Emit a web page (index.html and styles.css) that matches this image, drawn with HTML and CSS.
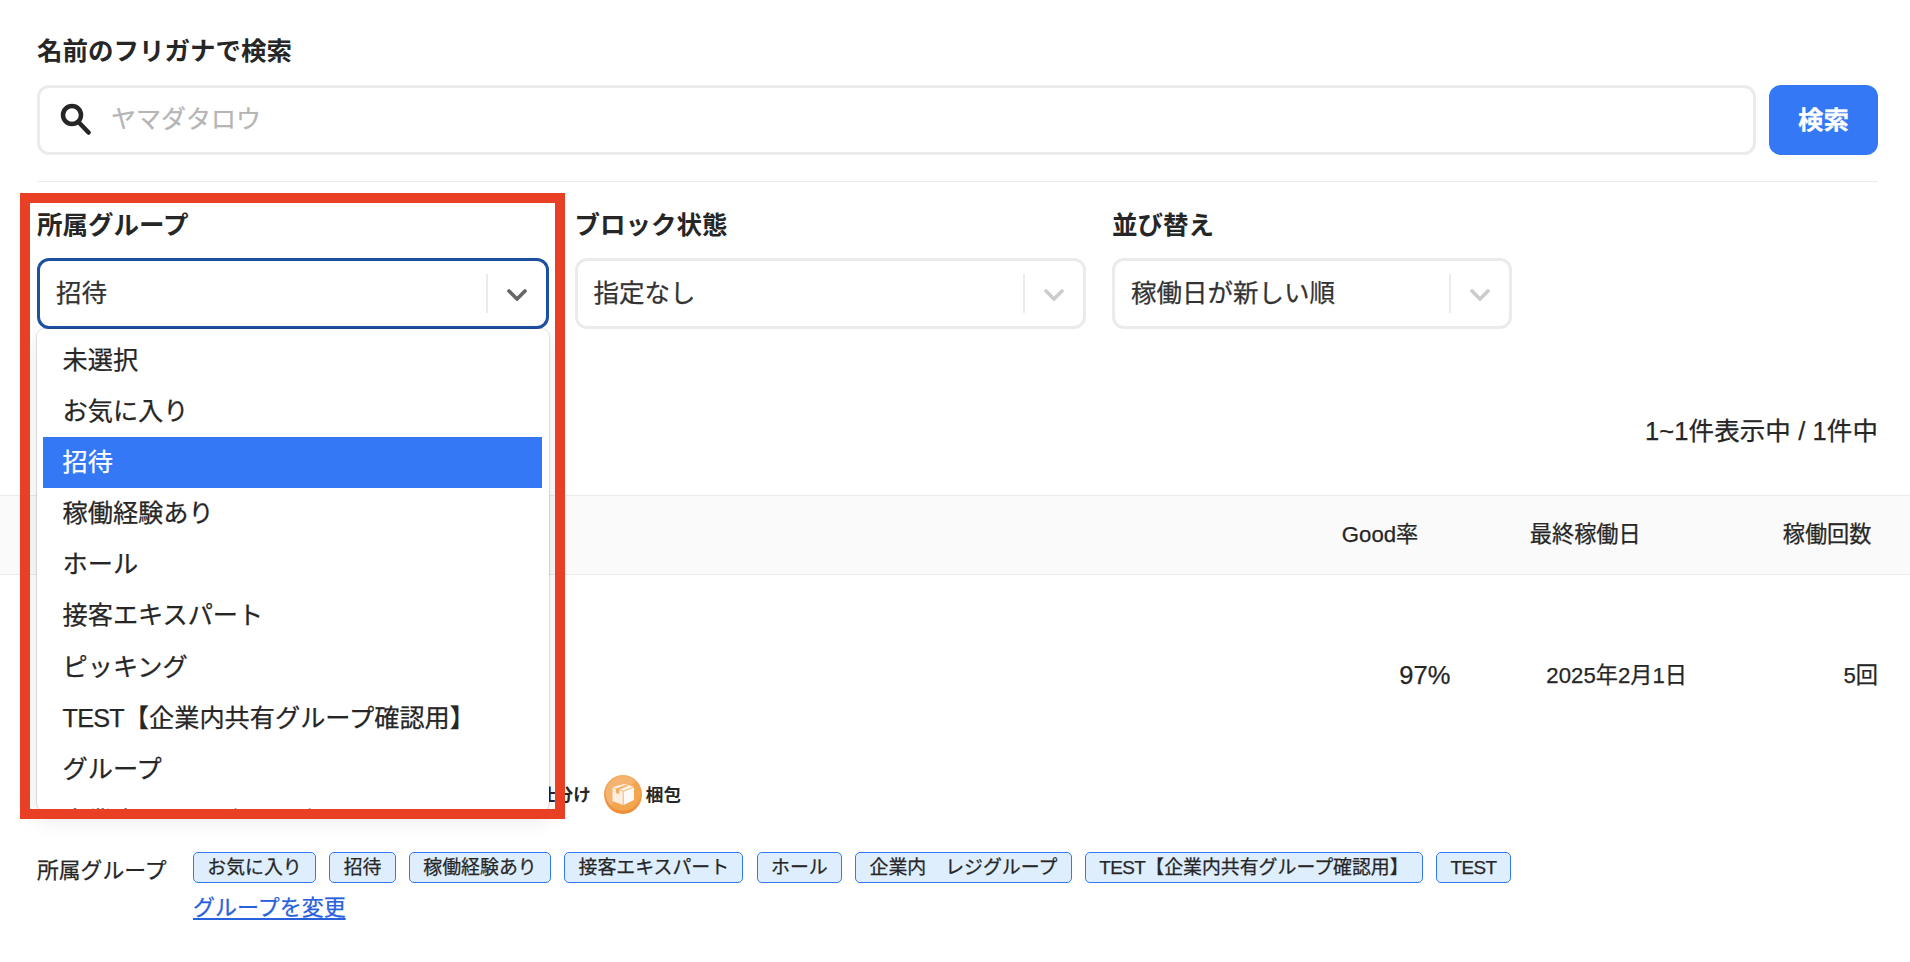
FILE: index.html
```html
<!DOCTYPE html>
<html lang="ja">
<head>
  <meta charset="UTF-8">
  <title>ワーカー検索</title>
  <meta name="viewport" content="width=device-width, initial-scale=1.0">
  <link rel="stylesheet" href="styles.css">
</head>
<body>
  <div class="search">
    <label class="label" for="kana">名前のフリガナで検索</label>
    <div class="search-row">
      <div class="search-box">
        <svg class="search-icon" viewBox="0 0 32 32">
          <circle cx="12" cy="12" r="9"/>
          <path d="M18.5 19 L28.5 29.5"/>
        </svg>
        <input type="text" id="kana" placeholder="ヤマダタロウ">
      </div>
      <button class="search-btn">検索</button>
    </div>
  </div>

  <div class="filters">
    <div class="filter">
      <span class="label">所属グループ</span>
      <div class="select open">
        <span class="value">招待</span>
        <span class="arrow"><svg viewBox="0 0 20 12"><path d="M2 2 L10 10 L18 2"/></svg></span>
        <ul class="menu">
          <li>未選択</li>
          <li>お気に入り</li>
          <li class="selected">招待</li>
          <li>稼働経験あり</li>
          <li>ホール</li>
          <li>接客エキスパート</li>
          <li>ピッキング</li>
          <li><span class="latin">TEST</span>【企業内共有グループ確認用】</li>
          <li>グループ</li>
          <li>企業内　レジグループ</li>
        </ul>
      </div>
    </div>
    <div class="filter">
      <span class="label">ブロック状態</span>
      <div class="select">
        <span class="value">指定なし</span>
        <span class="arrow"><svg viewBox="0 0 20 12"><path d="M2 2 L10 10 L18 2"/></svg></span>
      </div>
    </div>
    <div class="filter sort">
      <span class="label">並び替え</span>
      <div class="select">
        <span class="value">稼働日が新しい順</span>
        <span class="arrow"><svg viewBox="0 0 20 12"><path d="M2 2 L10 10 L18 2"/></svg></span>
      </div>
    </div>
  </div>

  <div class="count">1~1件表示中 / 1件中</div>

  <div class="list-head">
    <span class="good">Good率</span>
    <span class="last">最終稼働日</span>
    <span class="times">稼働回数</span>
  </div>

  <div class="worker">
    <span class="good">97%</span>
    <span class="last">2025年2月1日</span>
    <span class="times">5回</span>
  </div>

  <div class="skills">
    <span class="skill">仕分け</span>
    <span class="skill">
      <svg class="badge" viewBox="0 0 38 39">
        <defs>
          <linearGradient id="rim" x1="0" y1="0" x2="0" y2="1">
            <stop offset="0" stop-color="#f3ad62"/>
            <stop offset="1" stop-color="#f08a35"/>
          </linearGradient>
        </defs>
        <ellipse cx="19" cy="19.5" rx="19" ry="19.5" fill="url(#rim)"/>
        <circle cx="19" cy="18.5" r="17.2" fill="#f2a64f"/>
        <path d="M6.8 30.7 A17.2 17.2 0 0 1 31.2 6.3 Z" fill="#f4b470"/>
        <path d="M8.5 13 L18.8 16.5 V30 L8.5 26 Z" fill="#fdeee0"/>
        <path d="M19.6 16.5 L30 12.5 V25 L19.6 30 Z" fill="#fffaf5"/>
        <path d="M8.5 12.2 L20 9 L30 11.7 L19.2 15.7 Z" fill="#fff3e8"/>
        <path d="M12 13.5 L21.5 10 L24.5 10.8 L15.2 14.5 V19 L12 18 Z" fill="#f3ae66"/>
      </svg>
      梱包
    </span>
  </div>

  <div class="groups">
    <span class="groups-title">所属グループ</span>
    <div class="groups-body">
      <div class="tags">
        <span class="tag">お気に入り</span>
        <span class="tag">招待</span>
        <span class="tag">稼働経験あり</span>
        <span class="tag">接客エキスパート</span>
        <span class="tag">ホール</span>
        <span class="tag">企業内　レジグループ</span>
        <span class="tag"><span class="latin">TEST</span>【企業内共有グループ確認用】</span>
        <span class="tag"><span class="latin">TEST</span></span>
      </div>
      <a class="change" href="#">グループを変更</a>
    </div>
  </div>

  <!-- 説明用の赤枠 -->
  <div class="marker"></div>
</body>
</html>
```
FILE: styles.css
```css
:root {
  --text: #262626;
  --line: #ebebeb;
  --blue: #3478f6;
  --navy: #1e50a2;
  --red: #e94025;
}

* {
  box-sizing: border-box;
}

body {
  position: relative;
  height: 962px;
  margin: 0;
  overflow: hidden;
  background-color: #fff;
  color: var(--text);
  font-family: "Liberation Sans", "Noto Sans CJK JP", sans-serif;
  font-size: 25.5px;
  line-height: 36px;
  -webkit-text-stroke: 0.25px;
}

.label {
  display: block;
  font-weight: bold;
  -webkit-text-stroke: 0;
}

.latin {
  letter-spacing: -0.03em;
}

.search {
  margin: 0 32px 0 37px;
  padding: 33px 0 26px;
  height: 182px;
  border-bottom: 1px solid var(--line);
}

.search-row {
  display: flex;
  gap: 13px;
  margin-top: 16px;
}

.search-box {
  flex: 1;
  display: flex;
  align-items: center;
  height: 70px;
  padding: 0 0 2px 20px;
  border: 3px solid var(--line);
  border-radius: 12px;
}

.search-icon {
  width: 32px;
  height: 32px;
  fill: none;
  stroke: var(--text);
  stroke-width: 4.5;
  stroke-linecap: round;
}

input {
  flex: 1;
  margin-left: 19px;
  padding: 0;
  border: none;
  outline: none;
  font: inherit;
}

input::placeholder {
  color: #b5b5b5;
  font-size: 25px;
}

.search-btn {
  width: 109px;
  height: 70px;
  border: none;
  border-radius: 12px;
  background-color: var(--blue);
  color: #fff;
  font: inherit;
  font-weight: bold;
}

.filters {
  display: flex;
  gap: 26px;
  height: 147px;
  padding: 25px 0 0 37px;
}

.filter {
  width: 511.5px;
}

.filter.sort {
  width: 400px;
}

.select {
  position: relative;
  display: flex;
  align-items: center;
  height: 71px;
  margin-top: 15px;
  padding-left: 16px;
  border: 3px solid var(--line);
  border-radius: 12px;
  color: #333;
}

.select.open {
  border-color: var(--navy);
}

.value {
  flex: 1;
  padding-bottom: 2px;
}

.arrow {
  display: flex;
  align-items: center;
  justify-content: center;
  width: 60px;
  height: 39px;
  padding-top: 2px;
  border-left: 2px solid var(--line);
}

.arrow svg {
  width: 20px;
  height: 12px;
  fill: none;
  stroke: #ccc;
  stroke-width: 3.6;
  stroke-linecap: round;
}

.open .arrow svg {
  stroke: #666;
}

.menu {
  position: absolute;
  top: 68px;
  left: -3px;
  right: -3px;
  z-index: 1;
  height: 482px;
  margin: 0;
  padding: 6px 7px 0 6px;
  overflow: hidden;
  list-style: none;
  background-color: #fff;
  border-radius: 8px;
  box-shadow: 0 0 0 1px rgba(0,0,0,0.1), 0 8px 22px rgba(0,0,0,0.1);
  color: var(--text);
  font-size: 25.2px;
}

.menu li {
  height: 51.1px;
  padding-left: 19.5px;
  line-height: 51px;
}

.menu li:last-child {
  padding-top: 1px;
}

.menu .selected {
  background-color: var(--blue);
  color: #fff;
}

.count {
  height: 166px;
  padding: 84px 32px 0 0;
  text-align: right;
  letter-spacing: 0.1px;
}

.list-head, .worker {
  display: flex;
  justify-content: flex-end;
  font-size: 22.2px;
}

.list-head {
  height: 80px;
  padding-right: 38.5px;
  line-height: 77px;
  background-color: #fafafa;
  border-top: 1px solid var(--line);
  border-bottom: 1px solid var(--line);
}

.list-head .last {
  margin-left: 111.5px;
}

.list-head .times {
  margin-left: 142px;
}

.worker {
  height: 200px;
  padding: 82px 32px 0 0;
}

.worker .good {
  font-size: 25.5px;
}

.worker .last, .worker .times {
  line-height: 38px;
}

.worker .last {
  margin-left: 96px;
}

.worker .times {
  margin-left: 156.5px;
}

.skills {
  display: flex;
  align-items: center;
  gap: 13px;
  height: 39px;
  padding-left: 538px;
  font-size: 17.6px;
  font-weight: bold;
  -webkit-text-stroke: 0;
}

.skill {
  display: flex;
  align-items: center;
  gap: 4px;
  height: 39px;
  line-height: 34px;
}

.badge {
  width: 38px;
  height: 39px;
}

.groups {
  display: flex;
  padding: 38px 0 0 37px;
}

.groups-title {
  width: 156px;
  font-size: 21.8px;
  line-height: 38px;
}

.tags {
  display: flex;
  gap: 13.3px;
}

.tag {
  height: 31px;
  padding: 0 13.3px;
  border: 1px solid var(--blue);
  border-radius: 5px;
  background-color: #deeefd;
  font-size: 18.9px;
  line-height: 29px;
  white-space: nowrap;
}

.change {
  display: inline-block;
  margin-top: 7px;
  color: #2861dc;
  font-size: 22px;
  text-underline-offset: 3px;
  text-decoration-thickness: 2px;
}

.marker {
  position: absolute;
  top: 193px;
  left: 20px;
  z-index: 2;
  width: 545px;
  height: 626px;
  border: 10px solid var(--red);
}
```
